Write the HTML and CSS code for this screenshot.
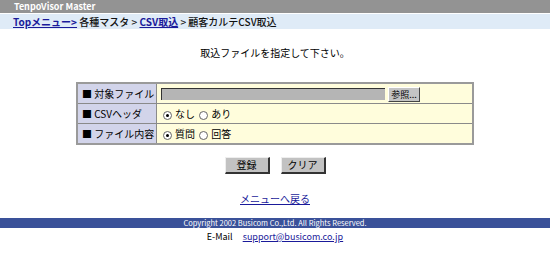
FILE: index.html
```html
<!DOCTYPE html>
<html lang="ja">
<head>
<meta charset="utf-8">
<link rel="stylesheet" href="styles.css">
</head>
<body>
<div class="top">TenpoVisor Master</div>
<div class="crumbs"><a href="#">Topメニュー&gt;</a> 各種マスタ &gt; <a href="#">CSV取込</a> &gt; 顧客カルテCSV取込</div>
<p class="msg">取込ファイルを指定して下さい。</p>
<table class="form">
  <tr>
    <th>■ 対象ファイル</th>
    <td><span class="file"></span><span class="browse">参照...</span></td>
  </tr>
  <tr>
    <th>■ CSVヘッダ</th>
    <td><span class="radio on"></span>なし <span class="radio"></span>あり</td>
  </tr>
  <tr>
    <th>■ ファイル内容</th>
    <td><span class="radio on"></span>質問 <span class="radio"></span>回答</td>
  </tr>
</table>
<div class="buttons"><span class="btn">登録</span><span class="btn">クリア</span></div>
<div class="back"><a href="#">メニューへ戻る</a></div>
<div class="copy">Copyright 2002 Busicom Co.,Ltd. All Rights Reserved.</div>
<div class="mail">E-Mail <a href="#">support@busicom.co.jp</a></div>
</body>
</html>
```
FILE: styles.css
```css
html, body { margin: 0; padding: 0; background: #fff; }
body { font-family: "Noto Sans CJK JP", "DejaVu Sans", sans-serif; font-size: 11px; color: #000; }
a { color: #1a1a9a; }
.top { height: 13px; background: #939393; color: #fff; font-weight: bold; font-size: 9px; line-height: 13px; padding-left: 14px; border-bottom: 1px solid #fff; }
.crumbs { height: 15px; background: #dfebf7; line-height: 15px; padding-left: 13px; font-size: 10px; font-weight: 500; color: #111; }
.crumbs a { color: #1a1a9a; font-weight: 600; }
.msg { margin: 0; padding-top: 18px; height: 20px; text-align: center; font-size: 10px; line-height: 12px; }
.form { margin: 15px auto 0; border-collapse: collapse; border: 2px solid #9a9a9a; width: 398px; }
.form th, .form td { border: 1px solid #8a8a8a; height: 19px; padding: 0 0 0 4px; font-size: 10px; font-weight: normal; text-align: left; }
.form th { background: #d2d4ea; width: 74px; }
.form td { background: #fffddc; }
.file { display: inline-block; vertical-align: middle; width: 223px; height: 11px; background: #b5b5b5; border-top: 1px solid #333; border-left: 1px solid #333; margin-right: 3px; }
.browse { display: inline-block; vertical-align: middle; width: 30px; height: 13px; line-height: 13px; background: #c4c4c4; border: 1px solid #fff; border-right-color: #444; border-bottom-color: #444; text-align: center; font-size: 9px; }
.radio { display: inline-block; vertical-align: middle; width: 7px; height: 7px; border: 1px solid #666; border-radius: 50%; background: #fff; margin: 0 3px 0 2px; position: relative; }
.radio.on::after { content: ""; position: absolute; left: 2px; top: 2px; width: 3px; height: 3px; border-radius: 50%; background: #000; }
.buttons { display: flex; justify-content: center; gap: 11px; margin-top: 12px; }
.btn { width: 42px; height: 14px; line-height: 14px; text-align: center; background: #c2c2c2; border: 1px solid #eee; border-right: 2px solid #333; border-bottom: 2px solid #333; font-size: 10px; }
.back { text-align: center; margin-top: 19px; font-size: 10px; line-height: 12px; }
.copy { margin-top: 13px; height: 10px; line-height: 10px; background: #3a5199; color: #fff; text-align: center; font-size: 7.5px; }
.mail { text-align: center; margin-top: 3px; font-size: 9px; line-height: 12px; }
.mail a { margin-left: 8px; }
```
